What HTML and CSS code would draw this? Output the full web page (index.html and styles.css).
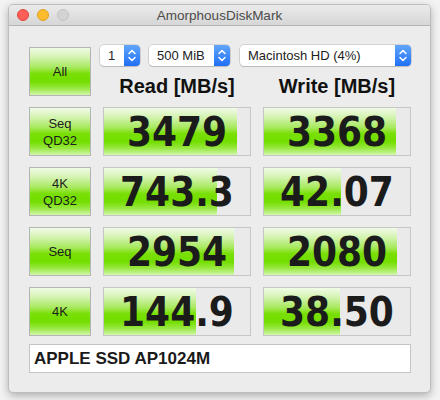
FILE: index.html
```html
<!DOCTYPE html>
<html>
<head>
<meta charset="utf-8">
<link rel="stylesheet" href="styles.css">
</head>
<body>
<div class="window">
  <div class="titlebar">
    <div class="lights">
      <span class="light red"></span>
      <span class="light yellow"></span>
      <span class="light gray"></span>
    </div>
    <div class="title">AmorphousDiskMark</div>
    <div></div>
  </div>
  <div class="content">
    <div class="grid">
      <div class="btn">All</div>
      <div class="head">
        <div class="popups">
          <div class="popup w-count"><span class="ptext">1</span><span class="stepper"><svg width="16" height="21" viewBox="0 0 16 21"><path d="M5 8.5 L8 5.5 L11 8.5 M5 12.5 L8 15.5 L11 12.5" fill="none" stroke="#fff" stroke-width="1.5" stroke-linecap="round" stroke-linejoin="round"/></svg></span></div>
          <div class="popup w-size"><span class="ptext">500 MiB</span><span class="stepper"><svg width="16" height="21" viewBox="0 0 16 21"><path d="M5 8.5 L8 5.5 L11 8.5 M5 12.5 L8 15.5 L11 12.5" fill="none" stroke="#fff" stroke-width="1.5" stroke-linecap="round" stroke-linejoin="round"/></svg></span></div>
          <div class="popup w-drive"><span class="ptext">Macintosh HD (4%)</span><span class="stepper"><svg width="16" height="21" viewBox="0 0 16 21"><path d="M5 8.5 L8 5.5 L11 8.5 M5 12.5 L8 15.5 L11 12.5" fill="none" stroke="#fff" stroke-width="1.5" stroke-linecap="round" stroke-linejoin="round"/></svg></span></div>
        </div>
        <div class="colheads">
          <div class="colhead">Read [MB/s]</div>
          <div class="colhead">Write [MB/s]</div>
        </div>
      </div>

      <div class="btn">Seq<br>QD32</div>
      <div class="bar"><div class="fill" style="width:91%"></div><span class="val">3479</span></div>
      <div class="bar"><div class="fill" style="width:90.4%"></div><span class="val">3368</span></div>

      <div class="btn">4K<br>QD32</div>
      <div class="bar"><div class="fill" style="width:77.5%"></div><span class="val">743.3</span></div>
      <div class="bar"><div class="fill" style="width:53%"></div><span class="val">42.07</span></div>

      <div class="btn">Seq</div>
      <div class="bar"><div class="fill" style="width:89%"></div><span class="val">2954</span></div>
      <div class="bar"><div class="fill" style="width:91%"></div><span class="val">2080</span></div>

      <div class="btn">4K</div>
      <div class="bar"><div class="fill" style="width:63%"></div><span class="val">144.9</span></div>
      <div class="bar"><div class="fill" style="width:52%"></div><span class="val">38.50</span></div>
    </div>
    <div class="device">APPLE SSD AP1024M</div>
  </div>
</div>
</body>
</html>
```

FILE: styles.css
```css
html, body {
  margin: 0;
  padding: 0;
}
body {
  width: 440px;
  height: 400px;
  overflow: hidden;
  background: #f3f3f3;
  font-family: "Liberation Sans", Arial, sans-serif;
}
.window {
  margin: 4px 0 0 8px;
  width: 423px;
  height: 389px;
  box-sizing: border-box;
  border: 1px solid #bdbdbd;
  border-radius: 5px;
  background: #ececec;
  box-shadow: 0 3px 8px rgba(0, 0, 0, 0.28);
  overflow: hidden;
  display: flex;
  flex-direction: column;
}
.titlebar {
  flex: none;
  height: 20px;
  border-bottom: 1px solid #b3b3b3;
  background: linear-gradient(#ebebeb, #d6d6d6);
  display: grid;
  grid-template-columns: 1fr auto 1fr;
  align-items: center;
}
.lights {
  display: flex;
  gap: 8px;
  padding-left: 8px;
}
.light {
  width: 12px;
  height: 12px;
  border-radius: 50%;
  box-sizing: border-box;
}
.red { background: #fc5f57; border: 1px solid #e0453e; }
.yellow { background: #fdbc2e; border: 1px solid #dfa024; }
.gray { background: #d3d3d3; border: 1px solid #c2c2c2; }
.title {
  font-size: 13.5px;
  color: #4c4c4c;
}
.content {
  padding: 21px 0 0 20px;
}
.grid {
  display: grid;
  grid-template-columns: 62px 148px 148px;
  grid-template-rows: repeat(5, 49px);
  column-gap: 12px;
  row-gap: 11px;
}
.btn {
  box-sizing: border-box;
  border: 1px solid #b5b5b5;
  background: linear-gradient(to bottom, #f1fbe7 0%, #d3f3b0 20%, #a6e95c 42%, #78df04 55%, #74de00 72%, #9ae943 86%, #d2f6ad 100%);
  display: flex;
  align-items: center;
  justify-content: center;
  text-align: center;
  font-size: 13px;
  line-height: 17px;
  color: #1c1c1c;
}
.head {
  grid-column: 2 / 4;
  display: flex;
  flex-direction: column;
}
.popups {
  display: flex;
  margin: -2px 0 0 -3px;
  gap: 9px;
}
.popup {
  height: 21px;
  box-sizing: border-box;
  background: #fff;
  border-radius: 4px;
  box-shadow: 0 0 0 0.5px rgba(0, 0, 0, 0.22), 0 1px 1px rgba(0, 0, 0, 0.12);
  display: flex;
  justify-content: space-between;
  align-items: center;
  font-size: 13px;
  color: #222;
  overflow: hidden;
}
.w-count { width: 40px; }
.w-size { width: 81px; margin-right: 1px; }
.w-drive { width: 171px; }
.ptext {
  padding-left: 8px;
}
.stepper {
  width: 16px;
  height: 21px;
  background: linear-gradient(#62a6fb, #1f6ff5);
  display: flex;
}
.colheads {
  margin-top: 8px;
  display: grid;
  grid-template-columns: 148px 148px;
  column-gap: 12px;
}
.colhead {
  text-align: center;
  font-size: 20px;
  line-height: 24px;
  font-weight: bold;
  color: #111;
}
.bar {
  box-sizing: border-box;
  border: 1px solid #c6c6c6;
  background: #eaeaea;
  display: grid;
}
.bar > * {
  grid-area: 1 / 1;
}
.fill {
  height: 100%;
  background: linear-gradient(to bottom, #f1fbe7 0%, #d3f3b0 20%, #a6e95c 42%, #78df04 55%, #74de00 72%, #9ae943 86%, #d2f6ad 100%);
}
.val {
  place-self: center;
  font-family: "DejaVu Sans Condensed", "DejaVu Sans", sans-serif;
  font-stretch: condensed;
  font-weight: bold;
  font-size: 40px;
  line-height: 1;
  color: #1b1b1b;
}
.device {
  margin-top: 8px;
  width: 382px;
  height: 29px;
  box-sizing: border-box;
  border: 1px solid #c4c4c4;
  background: #fff;
  padding-left: 4px;
  display: flex;
  align-items: center;
  font-size: 17px;
  font-weight: bold;
  color: #1a1a1a;
}
```
